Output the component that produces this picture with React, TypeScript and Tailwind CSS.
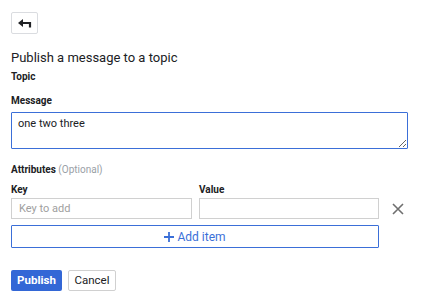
import React, { useState } from 'react';

const font = { fontFamily: 'Roboto, "Liberation Sans", sans-serif' };

const BackIcon: React.FC = () => (
    <svg width="14" height="9" viewBox="0 0 14 9" fill="none">
        <path d="M0 4 L5 0 L5 8 Z" fill="#202124" />
        <path d="M4 4 H12 V8.5" stroke="#202124" strokeWidth="2.2" fill="none" />
    </svg>
);

const App: React.FC = () => {
    const [message, setMessage] = useState('one two three');

    return (
        <div className="w-[438px] h-[308px] bg-white pl-[11px] pt-[12px] text-[#202124]" style={font}>
            <button className="w-[27px] h-[22px] border border-[#dadce0] rounded-[2px] flex items-center justify-center bg-white">
                <BackIcon />
            </button>

            <h1 className="mt-[16px] text-[13px] leading-[16px]">Publish a message to a topic</h1>
            <div className="mt-[4px] text-[10px] font-bold leading-[14px]">Topic</div>

            <div className="mt-[10px] text-[10px] font-bold leading-[14px]">Message</div>
            <textarea
                value={message}
                onChange={e => setMessage(e.target.value)}
                className="mt-[4px] block w-[397px] h-[37px] border border-[#3b6fd8] rounded-[1px] px-[6px] py-[4px] text-[11px] leading-[14px] outline-none"
            />

            <div className="mt-[14px] text-[10px] leading-[14px]">
                <span className="font-bold">Attributes</span>{' '}
                <span className="text-[#9aa0a6]">(Optional)</span>
            </div>

            <div className="mt-[7px] flex gap-[7px] items-end">
                <div className="w-[181px]">
                    <div className="text-[10px] font-bold leading-[11px]">Key</div>
                    <input
                        placeholder="Key to add"
                        className="w-full h-[21px] border border-[#d0d0d0] px-[7px] text-[11px] placeholder:text-[#a0a0a0] outline-none"
                    />
                </div>
                <div className="w-[180px]">
                    <div className="text-[10px] font-bold leading-[11px]">Value</div>
                    <input className="w-full h-[21px] border border-[#d0d0d0] px-[7px] text-[11px] outline-none" />
                </div>
                <button className="w-[20px] h-[21px] ml-[2px] flex items-center justify-center">
                    <svg width="12" height="12" viewBox="0 0 12 12">
                        <path d="M1 1 L11 11 M11 1 L1 11" stroke="#6f6f6f" strokeWidth="1.6" />
                    </svg>
                </button>
            </div>

            <button className="mt-[6px] w-[368px] h-[23px] border border-[#3b6fd8] rounded-[1px] flex items-center justify-center gap-[3px] text-[#3b6fd8] text-[12px]">
                <svg width="10" height="10" viewBox="0 0 10 10">
                    <path d="M5 0 V10 M0 5 H10" stroke="#3b6fd8" strokeWidth="1.8" />
                </svg>
                Add item
            </button>

            <div className="mt-[22px] flex gap-[6px]">
                <button className="w-[51px] h-[21px] bg-[#3367d6] rounded-[2px] text-white font-bold text-[11.5px]">Publish</button>
                <button className="w-[48px] h-[21px] border border-[#d0d0d0] rounded-[2px] text-[11.5px] bg-white">Cancel</button>
            </div>
        </div>
    );
};

export default App;
